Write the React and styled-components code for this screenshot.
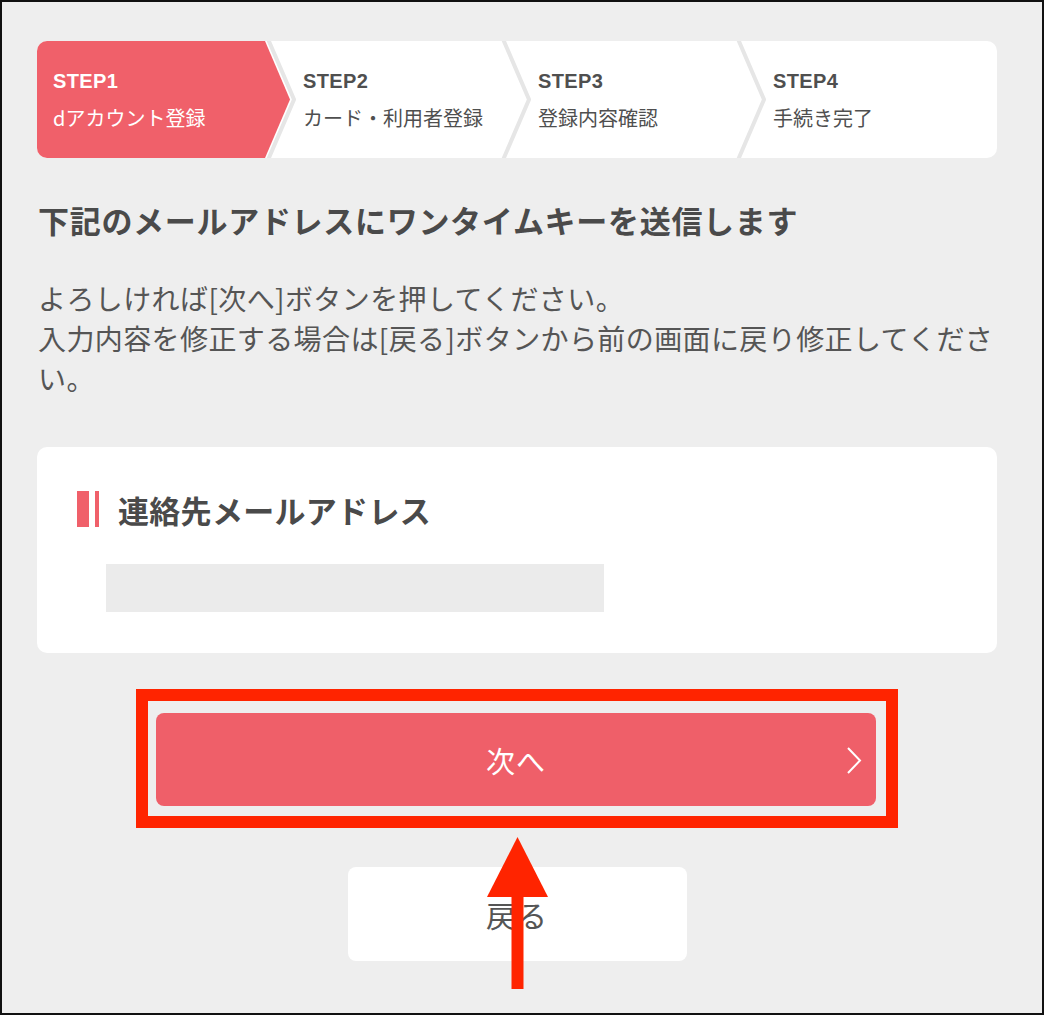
import styled, { createGlobalStyle } from 'styled-components';

const GlobalStyle = createGlobalStyle`
  html, body {
    margin: 0;
    padding: 0;
    background: #eeeeee;
  }
  * {
    box-sizing: border-box;
  }
`;

const PINK = '#f0606a';
const TEXT = '#4f4f4f';
const JP = `"Noto Sans CJK JP", "Noto Sans", sans-serif`;

const Page = styled.div`
  width: 1044px;
  height: 1015px;
  border: 2px solid #111;
  background: #eeeeee;
  overflow: hidden;
  font-family: ${JP};
  color: ${TEXT};
`;

const Content = styled.div`
  width: 960px;
  margin-left: 35px;
  padding-top: 39px;
`;

const Steps = styled.ol`
  list-style: none;
  margin: 0;
  padding: 0;
  height: 117px;
  display: grid;
  grid-template-columns: 253px 235px 235px 1fr;
  background: #fff;
  border-radius: 10px;
  overflow: hidden;
`;

const Step = styled.li`
  position: relative;
  display: flex;
  flex-direction: column;
  justify-content: center;
  gap: 7px;
  padding-left: ${(p) => (p.$first ? '16px' : '13px')};
  color: ${(p) => (p.$active ? '#fff' : TEXT)};

  &::before {
    content: '';
    position: absolute;
    inset: 0;
    background: ${(p) => (p.$active ? PINK : 'transparent')};
    clip-path: polygon(0 0, calc(100% - 25px) 0, 100% 50%, calc(100% - 25px) 100%, 0 100%);
  }
`;

const StepNo = styled.span`
  position: relative;
  font-family: "Liberation Sans", ${JP};
  font-weight: 700;
  font-size: 20px;
  letter-spacing: 0.4px;
  line-height: 30px;
`;

const StepName = styled.span`
  position: relative;
  font-size: 20px;
  line-height: 30px;
`;

const Separator = styled.svg`
  position: absolute;
  top: 0;
  right: -6px;
  width: 32px;
  height: 117px;
  z-index: 1;
`;

const Heading = styled.h1`
  margin: 42px 0 0 1px;
  font-size: 31px;
  line-height: 40px;
  font-weight: 700;
  letter-spacing: 0.7px;
  color: #4a4a4a;
`;

const Lead = styled.p`
  margin: 38px -40px 0 1px;
  font-size: 28px;
  line-height: 40px;
  letter-spacing: 0.4px;
  color: #555;
`;

const Card = styled.section`
  margin-top: 49px;
  background: #fff;
  border-radius: 10px;
  padding: 44px 40px 41px;
`;

const CardTitle = styled.h2`
  display: flex;
  align-items: center;
  margin: 0;
  height: 36px;
  font-size: 31px;
  font-weight: 700;
  letter-spacing: 0.3px;
  color: #4a4a4a;
`;

const Marker = styled.span`
  display: flex;
  gap: 6px;
  height: 36px;
  margin-right: 19px;

  &::before,
  &::after {
    content: '';
    background: ${PINK};
  }
  &::before {
    width: 12px;
  }
  &::after {
    width: 4px;
  }
`;

const MaskedValue = styled.div`
  margin: 37px 0 0 29px;
  width: 498px;
  height: 48px;
  background: #ebebeb;
`;

const Actions = styled.div`
  position: relative;
  margin-top: 36px;
  display: flex;
  flex-direction: column;
  align-items: center;
`;

const Highlight = styled.div`
  width: 762px;
  border: 12px solid #ff2400;
  padding: 12px 10px 10px 8px;
`;

const NextButton = styled.button`
  position: relative;
  width: 100%;
  height: 93px;
  border: 0;
  border-radius: 8px;
  background: #ef5f69;
  color: #fff;
  font-family: ${JP};
  font-size: 29px;
  letter-spacing: 1px;
`;

const Chevron = styled.svg`
  position: absolute;
  right: 14px;
  top: 34px;
  width: 16px;
  height: 27px;
`;

const BackButton = styled.button`
  margin-top: 39px;
  width: 339px;
  height: 94px;
  border: 0;
  border-radius: 8px;
  background: #fff;
  color: #555;
  font-family: ${JP};
  font-size: 30px;
  letter-spacing: 1px;
`;

const Arrow = styled.svg`
  position: absolute;
  left: 450px;
  top: 148px;
  width: 61px;
  height: 152px;
`;

const steps = [
  { no: 'STEP1', name: 'dアカウント登録' },
  { no: 'STEP2', name: 'カード・利用者登録' },
  { no: 'STEP3', name: '登録内容確認' },
  { no: 'STEP4', name: '手続き完了' },
];

export default function App() {
  return (
    <Page>
      <GlobalStyle />
      <Content>
        <Steps>
          {steps.map((s, i) => (
            <Step key={s.no} $active={i === 0} $first={i === 0}>
              <StepNo>{s.no}</StepNo>
              <StepName>{s.name}</StepName>
              {i < steps.length - 1 && (
                <Separator viewBox="0 0 32 117">
                  <polyline
                    points="4,-2 30,58.5 4,119"
                    fill="none"
                    stroke="#e6e6e6"
                    strokeWidth="4"
                  />
                </Separator>
              )}
            </Step>
          ))}
        </Steps>

        <Heading>下記のメールアドレスにワンタイムキーを送信します</Heading>

        <Lead>
          よろしければ[次へ]ボタンを押してください。
          <br />
          入力内容を修正する場合は[戻る]ボタンから前の画面に戻り修正してください。
        </Lead>

        <Card>
          <CardTitle>
            <Marker />
            連絡先メールアドレス
          </CardTitle>
          <MaskedValue />
        </Card>

        <Actions>
          <Highlight>
            <NextButton>
              次へ
              <Chevron viewBox="0 0 16 27">
                <polyline points="2,1 14,13.5 2,26" fill="none" stroke="#fff" strokeWidth="2" />
              </Chevron>
            </NextButton>
          </Highlight>
          <BackButton>戻る</BackButton>
          <Arrow viewBox="0 0 61 152">
            <polygon points="30.5,0 61,60 0,60" fill="#ff2400" />
            <rect x="24.5" y="58" width="12" height="94" fill="#ff2400" />
          </Arrow>
        </Actions>
      </Content>
    </Page>
  );
}
